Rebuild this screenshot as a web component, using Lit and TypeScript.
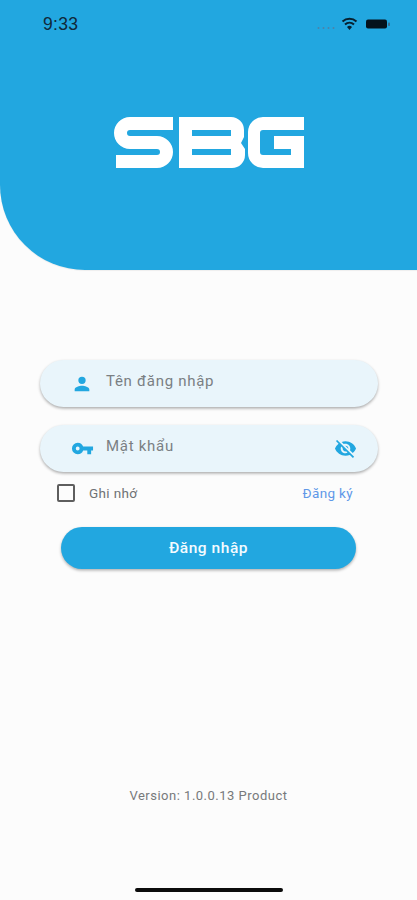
import { LitElement, html, css } from "lit";
import { customElement } from "lit/decorators.js";

@customElement("app-root")
export class AppRoot extends LitElement {
  static styles = css`
    :host {
      display: block;
      width: 417px;
      height: 900px;
      background: #fcfcfc;
      font-family: Roboto, "Noto Sans", sans-serif;
      overflow: hidden;
    }
    .screen { height: 900px; display: flex; flex-direction: column; box-sizing: border-box; }
    .header {
      height: 270px;
      flex: none;
      background: #22a7e0;
      border-bottom-left-radius: 85px;
      display: flex;
      flex-direction: column;
      align-items: center;
      box-shadow: 0 1px 1px rgba(0,0,0,.06);
    }
    .status {
      align-self: stretch;
      height: 24px;
      margin-top: 12px;
      padding: 0 26px 0 43px;
      display: flex;
      align-items: center;
      justify-content: space-between;
    }
    .time { font-family: "Liberation Sans", sans-serif; font-size: 17.5px; color: #10293a; letter-spacing: .3px; }
    .status-icons { display: block; }
    .logo { display: block; margin-top: 80px; }
    .form { display: flex; flex-direction: column; margin-top: 90px; }
    .field {
      height: 47px;
      margin: 0 39px 0 40px;
      border-radius: 24px;
      background: #e9f5fb;
      box-shadow: 0 1.5px 3px rgba(0,0,0,.32);
      display: flex;
      align-items: center;
      box-sizing: border-box;
      padding-left: 31px;
      padding-right: 21px;
      color: #7a7f83;
      font-size: 15px;
      letter-spacing: .72px;
    }
    .field + .field { margin-top: 18px; }
    .field svg { flex: none; }
    .field span { margin-left: 13px; flex: 1; position: relative; top: -3px; }
    .field.pw span { margin-left: 12px; }
    .options {
      display: flex;
      align-items: center;
      margin: 12px 64px 0 57px;
      height: 17px;
      font-size: 13.5px;
      color: #6f7275;
      letter-spacing: .35px;
    }
    .box { width: 14px; height: 14px; border: 2px solid #5e5e5e; border-radius: 2px; flex: none; }
    .remember { margin-left: 14px; flex: 1; }
    .signup { color: #5f98e8; }
    .btn {
      height: 42px;
      margin: 26px 61px 0 61px;
      border-radius: 21px;
      background: #22a7e0;
      box-shadow: 0 1.5px 3px rgba(0,0,0,.3);
      color: #f4fbff;
      font-weight: 500;
      font-size: 15.5px;
      letter-spacing: .55px;
      display: flex;
      align-items: center;
      justify-content: center;
    }
    .version {
      margin-top: auto;
      text-align: center;
      font-size: 13px;
      letter-spacing: .5px;
      color: #77797b;
      line-height: 16px;
    }
    .home {
      width: 148px;
      height: 4px;
      border-radius: 2px;
      background: #0c0c0c;
      margin: 84px auto 8px;
      flex: none;
    }
  `;

  render() {
    return html`
      <div class="screen">
        <div class="header">
          <div class="status">
            <span class="time">9:33</span>
            <svg class="status-icons" width="75" height="24" viewBox="316 12 75 24">
              <g fill="#4d83a8"><circle cx="318.500" cy="28" r="1"/><circle cx="323.500" cy="28" r="1"/><circle cx="328.500" cy="28" r="1"/><circle cx="333.500" cy="28" r="1"/></g>
              <path d="M342.500 21.500a10.500 10.500 0 0 1 14 0M345 24.500a6.800 6.800 0 0 1 9 0" fill="none" stroke="#07202f" stroke-width="2"/>
              <path d="M347 27a3.600 3.600 0 0 1 5 0L349.500 30z" fill="#07202f"/>
              <rect x="366" y="19.500" width="21" height="9" rx="2" fill="#04121c"/>
              <rect x="388" y="22.500" width="2" height="3.500" rx=".8" fill="#3a6d8e"/>
            </svg>
          </div>
          <svg class="logo" width="192" height="54" viewBox="113 116 192 54" aria-label="SBG">
            <path d="M173 123.500H130a9.500 9.500 0 0 0 0 19H157a9.500 9.500 0 0 1 0 19H116" fill="none" stroke="#fff" stroke-width="13"/>
            <path fill="#fff" fill-rule="evenodd" d="M179 117H231a13 13 0 0 1 13 13V137L241 143L245 149V155a13 13 0 0 1-13 13H179ZM192 130V136H231V130ZM192 149V155H231V149Z"/>
            <path fill="#fff" d="M304 117V130H263a3 3 0 0 0-3 3V152a3 3 0 0 0 3 3H291V149H274V136H304V168H263a15 15 0 0 1-15-15V132a15 15 0 0 1 15-15Z"/>
          </svg>
        </div>
        <div class="form">
          <div class="field">
            <svg width="22" height="22" viewBox="0 0 24 24"><path fill="#22a7e0" d="M12 12a4 4 0 1 0 0-8 4 4 0 0 0 0 8zm0 2c-2.700 0-8 1.300-8 4v2h16v-2c0-2.700-5.300-4-8-4z"/></svg>
            <span>Tên đăng nhập</span>
          </div>
          <div class="field pw">
            <svg width="23" height="23" viewBox="0 0 24 24"><path fill="#22a7e0" d="M12.650 10A6 6 0 0 0 7 6a6 6 0 0 0 0 12 6 6 0 0 0 5.650-4H17v4h4v-4h2v-4H12.650zM7 14a2 2 0 1 1 0-4 2 2 0 0 1 0 4z"/></svg>
            <span>Mật khẩu</span>
            <svg width="23" height="23" viewBox="0 0 24 24"><path fill="#22a7e0" d="M12 7c2.760 0 5 2.240 5 5 0 .650-.130 1.260-.360 1.830l2.920 2.920c1.510-1.260 2.700-2.890 3.430-4.750-1.730-4.390-6-7.500-11-7.500-1.400 0-2.740.250-3.980.700l2.160 2.160C10.740 7.130 11.350 7 12 7zM2 4.270l2.280 2.280.460.460A11.800 11.800 0 0 0 1 12c1.730 4.390 6 7.500 11 7.500 1.550 0 3.030-.300 4.380-.840l.420.420L19.730 22 21 20.730 3.270 3 2 4.270zM7.530 9.800l1.550 1.550c-.050.210-.080.430-.080.650 0 1.660 1.340 3 3 3 .220 0 .440-.030.650-.080l1.550 1.550c-.670.330-1.410.530-2.200.530-2.760 0-5-2.240-5-5 0-.790.200-1.530.530-2.200zm4.310-.780l3.150 3.150.020-.160c0-1.660-1.340-3-3-3l-.170.010z"/></svg>
          </div>
          <div class="options">
            <div class="box"></div>
            <span class="remember">Ghi nhớ</span>
            <span class="signup">Đăng ký</span>
          </div>
          <div class="btn">Đăng nhập</div>
        </div>
        <div class="version">Version: 1.0.0.13 Product</div>
        <div class="home"></div>
      </div>
    `;
  }
}
